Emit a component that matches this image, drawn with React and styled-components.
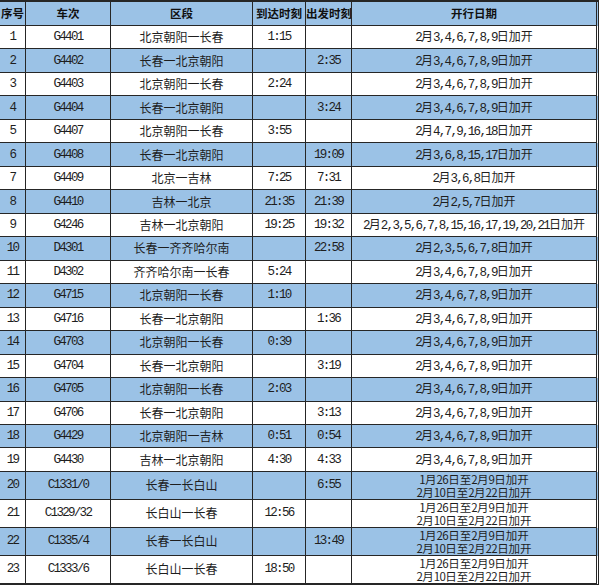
import React from 'react';
import styled, { createGlobalStyle } from 'styled-components';

const BLUE = '#9bc2e6';
const LINE = '#262626';
const COLS = '26px 85px 142px 53px 46px 245px';

const GlobalStyle = createGlobalStyle`
  body {
    margin: 0;
    background: #fff;
    color: #1e1e1e;
    font-family: "Noto Sans CJK SC", "Liberation Sans", sans-serif;
  }
`;

const Sheet = styled.div`
  width: 598px;
  display: flex;
  flex-direction: column;
  border-top: 2px solid ${LINE};
  border-right: 1px solid ${LINE};
  border-bottom: 1px solid ${LINE};
  background: #fff;
`;

const Row = styled.div`
  display: grid;
  grid-template-columns: ${COLS};
  height: ${(p) => p.$h}px;
  background: ${(p) => (p.$alt ? BLUE : '#fff')};
`;

const HeadCell = styled.div`
  border-right: 1px solid ${LINE};
  border-bottom: 1px solid ${LINE};
  overflow: hidden;
  white-space: nowrap;
  text-align: center;
  line-height: 23px;
  font-size: 11.5px;
  font-weight: 700;
  color: #111;
`;

const Cell = styled.div`
  display: flex;
  flex-direction: column;
  align-items: center;
  justify-content: center;
  border-right: 1px solid ${LINE};
  border-bottom: 1px solid ${LINE};
  overflow: hidden;
  white-space: nowrap;
  font-size: 12px;
  line-height: ${(p) => (p.$tight ? '13.5px' : '16px')};
`;

const Line = styled.div`
  white-space: nowrap;
  height: ${(p) => (p.$tight ? '13.5px' : 'auto')};
`;

const Han = styled.span`
  font-family: "Noto Sans CJK SC", sans-serif;
  font-size: ${(p) => (p.$small ? '11.5px' : '12px')};
`;

const Latin = styled.span`
  font-family: ${(p) => (p.$sans ? '"Noto Sans CJK SC", sans-serif' : '"Liberation Mono", monospace')};
  font-size: ${(p) => (p.$sans ? '11.5px' : '12.5px')};
  letter-spacing: ${(p) => (p.$sans ? '-0.6px' : '-1.7px')};
`;

const Mixed = ({ text, sans }) =>
  text
    .split(/([\x20-\x7e]+)/)
    .filter(Boolean)
    .map((s, i) =>
      /^[\x20-\x7e]+$/.test(s) ? (
        <Latin key={i} $sans={sans}>{s}</Latin>
      ) : (
        <Han key={i} $small={sans}>{s}</Han>
      )
    );

const STD = '2月3,4,6,7,8,9日加开';
const CBS = ['1月26日至2月9日加开', '2月10日至2月22日加开'];

const rows = [
  ['G4401', '北京朝阳一长春', '1:15', '', STD],
  ['G4402', '长春一北京朝阳', '', '2:35', STD],
  ['G4403', '北京朝阳一长春', '2:24', '', STD],
  ['G4404', '长春一北京朝阳', '', '3:24', STD],
  ['G4407', '北京朝阳一长春', '3:55', '', '2月4,7,9,16,18日加开'],
  ['G4408', '长春一北京朝阳', '', '19:09', '2月3,6,8,15,17日加开'],
  ['G4409', '北京一吉林', '7:25', '7:31', '2月3,6,8日加开'],
  ['G4410', '吉林一北京', '21:35', '21:39', '2月2,5,7日加开'],
  ['G4246', '吉林一北京朝阳', '19:25', '19:32', '2月2,3,5,6,7,8,15,16,17,19,20,21日加开'],
  ['D4301', '长春一齐齐哈尔南', '', '22:58', '2月2,3,5,6,7,8日加开'],
  ['D4302', '齐齐哈尔南一长春', '5:24', '', STD],
  ['G4715', '北京朝阳一长春', '1:10', '', STD],
  ['G4716', '长春一北京朝阳', '', '1:36', STD],
  ['G4703', '北京朝阳一长春', '0:39', '', STD],
  ['G4704', '长春一北京朝阳', '', '3:19', STD],
  ['G4705', '北京朝阳一长春', '2:03', '', STD],
  ['G4706', '长春一北京朝阳', '', '3:13', STD],
  ['G4429', '北京朝阳一吉林', '0:51', '0:54', STD],
  ['G4430', '吉林一北京朝阳', '4:30', '4:33', STD],
  ['C1331/0', '长春一长白山', '', '6:55', CBS],
  ['C1329/32', '长白山一长春', '12:56', '', CBS],
  ['C1335/4', '长春一长白山', '', '13:49', CBS],
  ['C1333/6', '长白山一长春', '18:50', '', CBS],
];

const headers = ['序号', '车次', '区段', '到达时刻', '出发时刻', '开行日期'];

export default function App() {
  return (
    <>
      <GlobalStyle />
      <Sheet>
        <Row $h={24} $alt>
          {headers.map((h) => (
            <HeadCell key={h}>{h}</HeadCell>
          ))}
        </Row>
        {rows.map(([train, route, arr, dep, dates], i) => {
          const multi = Array.isArray(dates);
          return (
            <Row key={train} $h={multi ? 28 : 446 / 19} $alt={i % 2 === 1}>
              <Cell><Mixed text={String(i + 1)} /></Cell>
              <Cell><Mixed text={train} /></Cell>
              <Cell><Mixed text={route} /></Cell>
              <Cell><Mixed text={arr} /></Cell>
              <Cell><Mixed text={dep} /></Cell>
              <Cell $tight={multi}>
                {multi ? (
                  dates.map((d) => (
                    <Line key={d} $tight><Mixed text={d} sans /></Line>
                  ))
                ) : (
                  <Line><Mixed text={dates} /></Line>
                )}
              </Cell>
            </Row>
          );
        })}
      </Sheet>
    </>
  );
}
